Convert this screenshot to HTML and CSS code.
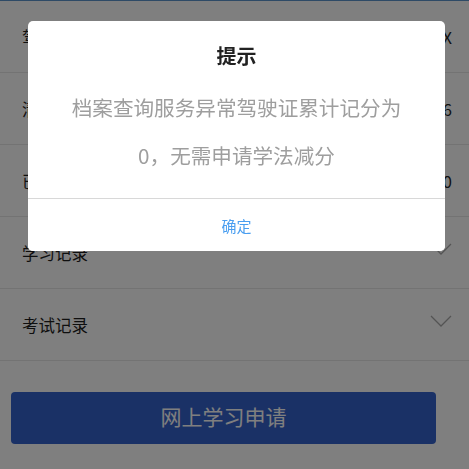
FILE: index.html
```html
<!DOCTYPE html>
<html lang="zh-CN">
<head>
<meta charset="utf-8">
<title>学法减分</title>
<link rel="stylesheet" href="styles.css">
</head>
<body>
<div class="page">
  <div class="topline"></div>
  <div class="list">
    <div class="row"><span class="label">驾驶证号</span><span class="value">32010219880516123X</span></div>
    <div class="row"><span class="label">清分日期</span><span class="value">2025-03-16</span></div>
    <div class="row"><span class="label">已累计记分</span><span class="value">0</span></div>
    <div class="row"><span class="label">学习记录</span>
      <svg class="chev" width="22" height="12" viewBox="0 0 22 12"><path d="M1 1 L11 11 L21 1" fill="none" stroke="#a8a8a8" stroke-width="1.3"/></svg>
    </div>
    <div class="row"><span class="label">考试记录</span>
      <svg class="chev" width="22" height="12" viewBox="0 0 22 12"><path d="M1 1 L11 11 L21 1" fill="none" stroke="#a8a8a8" stroke-width="1.3"/></svg>
    </div>
  </div>
  <div class="btnwrap"><button class="apply">网上学习申请</button></div>
</div>
<div class="mask"></div>
<div class="dialog">
  <div class="dlg-title">提示</div>
  <div class="dlg-msg">档案查询服务异常驾驶证累计记分为<br>0，无需申请学法减分</div>
  <div class="dlg-actions"><button class="dlg-ok">确定</button></div>
</div>
</body>
</html>
```

FILE: styles.css
```css
html, body {
  margin: 0;
  padding: 0;
  background: #ffffff;
  font-family: "Noto Sans CJK SC", "Noto Sans", sans-serif;
}
.page {
  width: 469px;
  height: 469px;
  overflow: hidden;
  background: #ffffff;
}
.topline {
  height: 1px;
  background: #5c94cc;
}
.row {
  box-sizing: border-box;
  height: 72px;
  border-bottom: 1px solid #e6e6e6;
  display: flex;
  align-items: center;
  justify-content: space-between;
  padding: 0 17px 0 22px;
}
.label {
  font-size: 16.5px;
  color: #1e1e1e;
}
.value {
  font-size: 16.5px;
  color: #1e1e1e;
}
.chev {
  display: block;
  margin-bottom: 7px;
}
.btnwrap {
  padding: 31px 33px 0 11px;
}
.apply {
  display: block;
  width: 100%;
  height: 52px;
  border: 0;
  border-radius: 4px;
  background: #3462cc;
  color: #ffffff;
  font-family: "Noto Sans CJK SC", sans-serif;
  font-size: 21px;
  padding: 0 0 4px;
}
.mask {
  position: fixed;
  left: 0;
  top: 0;
  right: 0;
  bottom: 0;
  background: rgba(0, 0, 0, 0.5);
}
.dialog {
  position: absolute;
  left: 28px;
  top: 21px;
  width: 417px;
  background: #ffffff;
  border-radius: 5px;
  overflow: hidden;
}
.dlg-title {
  padding-top: 19px;
  line-height: 32px;
  text-align: center;
  font-size: 20px;
  font-weight: bold;
  color: #222222;
}
.dlg-msg {
  margin-top: 11px;
  padding: 0 20px 19px;
  line-height: 48px;
  text-align: center;
  font-size: 20.6px;
  color: #9e9e9e;
}
.dlg-actions {
  border-top: 1px solid #d8d8d8;
}
.dlg-ok {
  display: block;
  width: 100%;
  height: 52px;
  border: 0;
  background: #ffffff;
  color: #4a9ef0;
  font-family: "Noto Sans CJK SC", sans-serif;
  font-size: 15px;
  padding: 0;
}
```
